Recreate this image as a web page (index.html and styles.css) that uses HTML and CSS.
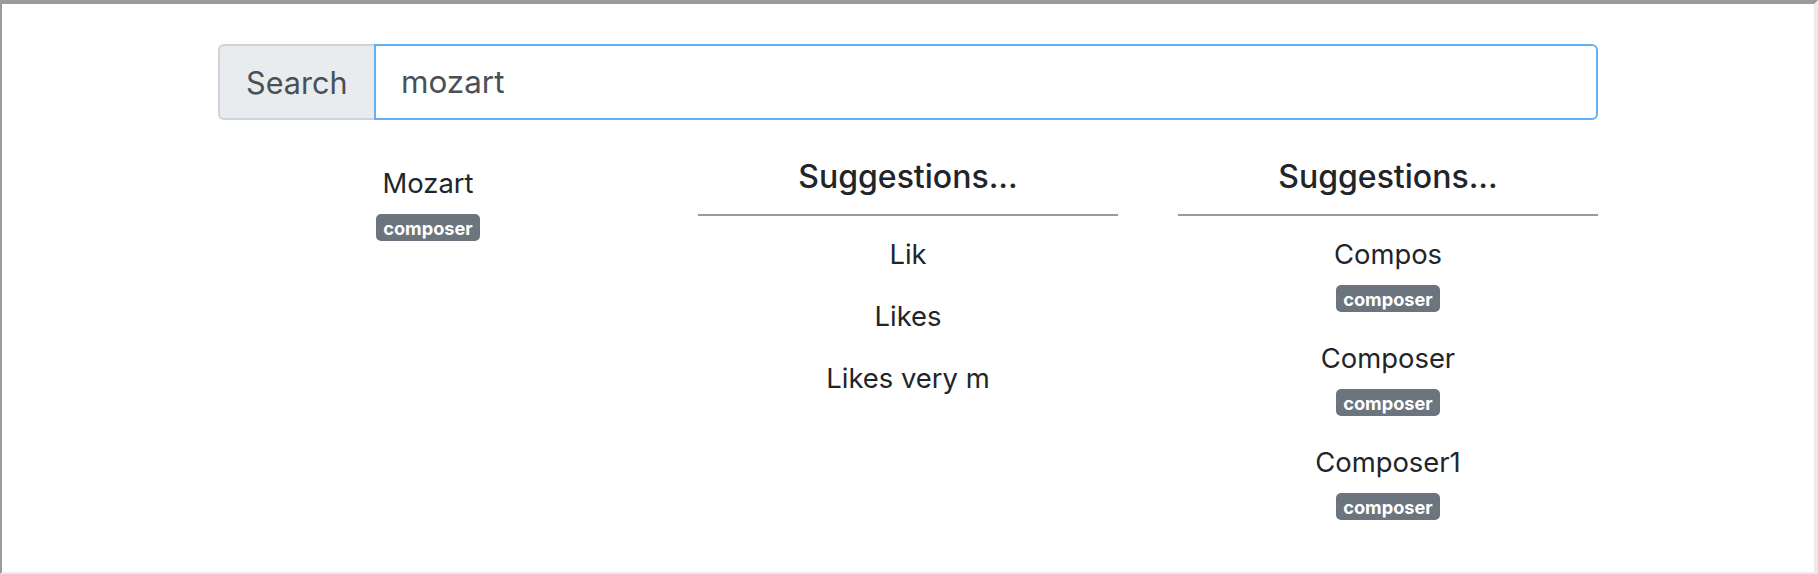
FILE: index.html
```html
<!DOCTYPE html>
<html lang="en">
<head>
<meta charset="utf-8">
<title>Search</title>
<link rel="stylesheet" href="styles.css">
</head>
<body>
<div class="frame">
  <div class="container">
    <div class="input-group">
      <span class="addon">Search</span>
      <input class="search-input" type="text" value="mozart">
    </div>
    <div class="results">
      <div class="col col-main">
        <div class="item">
          <div class="name">Mozart</div>
          <span class="badge">composer</span>
        </div>
      </div>
      <div class="col">
        <h5 class="col-title">Suggestions...</h5>
        <hr class="rule">
        <div class="item"><div class="name">Lik</div></div>
        <div class="item"><div class="name">Likes</div></div>
        <div class="item"><div class="name">Likes very m</div></div>
      </div>
      <div class="col">
        <h5 class="col-title">Suggestions...</h5>
        <hr class="rule">
        <div class="item"><div class="name">Compos</div><span class="badge">composer</span></div>
        <div class="item"><div class="name">Composer</div><span class="badge">composer</span></div>
        <div class="item"><div class="name">Composer1</div><span class="badge">composer</span></div>
      </div>
    </div>
  </div>
</div>
</body>
</html>
```

FILE: styles.css
```css
* { box-sizing: border-box; }
html, body { margin: 0; padding: 0; background: #fff; }
body {
  font-family: Inter, "Noto Sans", sans-serif;
  color: #212529;
  font-size: 27.4px;
}
.frame {
  height: 574px;
  border-top: 4px solid #9b9b9b;
  border-left: 2px solid #9b9b9b;
  border-right: 4px solid #ebebeb;
  border-bottom: 2px solid #ebebeb;
  padding-top: 40px;
}
.container {
  width: 1380px;
  margin: 0 auto;
}
.input-group {
  display: flex;
  height: 76px;
}
.addon {
  width: 156px;
  display: flex;
  align-items: center;
  padding-left: 26px;
  background: #e9ecef;
  border: 2px solid #cfd3d7;
  border-right: none;
  border-radius: 6px 0 0 6px;
  color: #495057;
  font-size: 30.6px;
}
.search-input {
  flex: 1;
  border: 2px solid #62b0f7;
  border-radius: 0 6px 6px 0;
  padding: 0 0 0 25px;
  font-family: inherit;
  font-size: 31.4px;
  color: #495057;
  outline: none;
  background: #fff;
}
.results {
  display: grid;
  grid-template-columns: repeat(3, 420px);
  column-gap: 60px;
  margin-top: 38px;
  text-align: center;
}
.col-main { padding-top: 6px; }
.col-title {
  margin: 0;
  font-size: 32px;
  font-weight: 500;
  line-height: 38px;
}
.rule {
  margin: 18px 0 19px;
  border: 0;
  border-top: 2px solid #9a9a9a;
}
.item {
  display: flex;
  flex-direction: column;
  align-items: center;
  margin-bottom: 24px;
}
.name { line-height: 38px; }
.badge {
  margin: 12px 0 3px;
  height: 27px;
  padding: 0 7px;
  display: inline-flex;
  align-items: center;
  border-radius: 5px;
  background: #6c757d;
  color: #fff;
  font-size: 18.2px;
  font-weight: 700;
}
```
